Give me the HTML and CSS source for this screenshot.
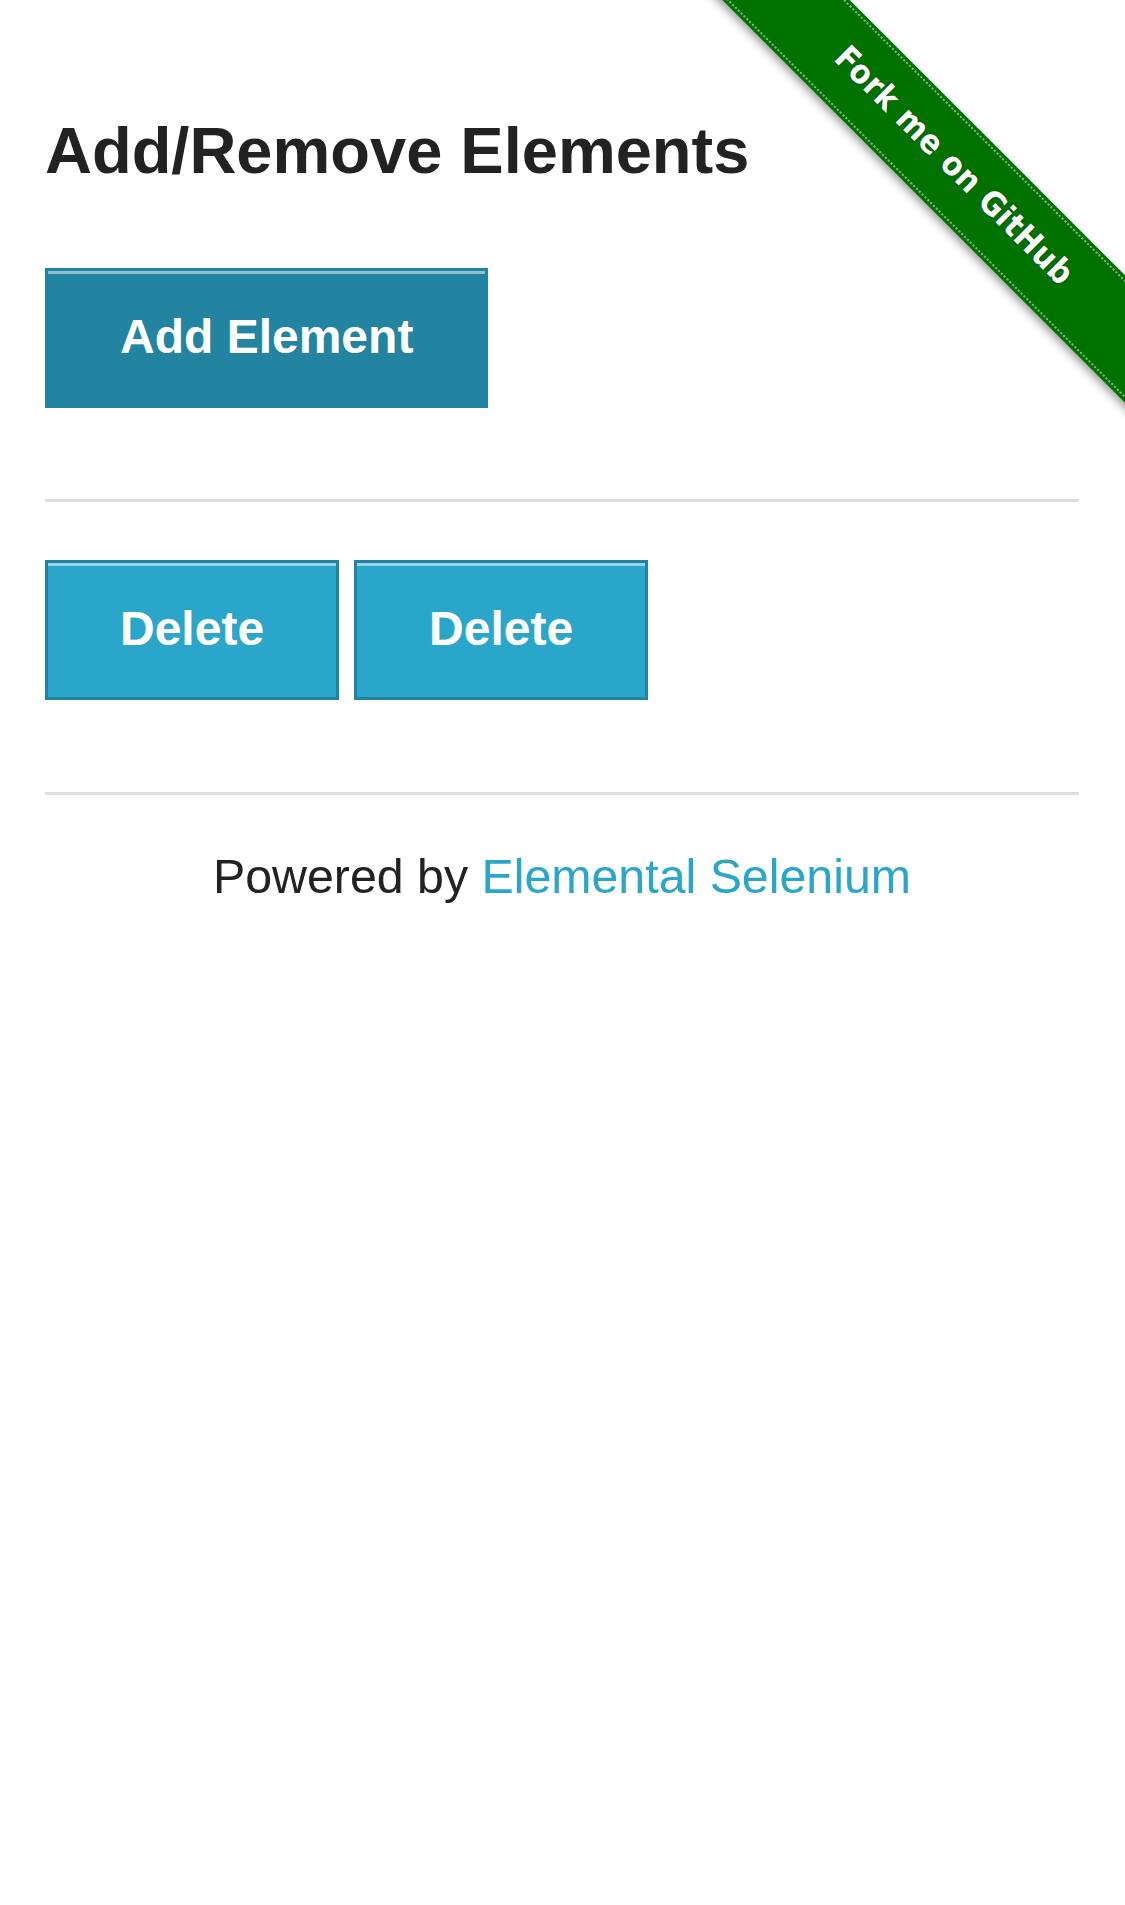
FILE: index.html
```html
<!DOCTYPE html>
<html>
<head>
<meta charset="utf-8">
<title>The Internet</title>
<link rel="stylesheet" href="styles.css">
</head>
<body>
<a class="ribbon-wrap" href="#"><span class="ribbon"><span class="ribbon-text">Fork me on GitHub</span></span></a>
<div class="page">
  <div class="example">
    <h3 class="title">Add/Remove Elements</h3>
    <button class="btn btn-add">Add Element</button>
    <hr class="rule rule-top">
    <div class="elements">
      <button class="btn btn-delete">Delete</button>
      <button class="btn btn-delete">Delete</button>
    </div>
  </div>
  <hr class="rule rule-bottom">
  <div class="footer">Powered by <a class="footer-link" href="#">Elemental Selenium</a></div>
</div>
</body>
</html>
```
FILE: styles.css
```css
html, body {
  margin: 0;
  padding: 0;
  background: #ffffff;
}
body {
  font-family: "Liberation Sans", Arial, Helvetica, sans-serif;
  color: #222222;
  position: relative;
  min-height: 1905px;
  overflow: hidden;
}
.page {
  padding: 118px 46px 0 45px;
}
.title {
  margin: 0;
  font-size: 65px;
  line-height: 65px;
  font-weight: bold;
  color: #222222;
}
.btn {
  font-family: "Liberation Sans", Arial, Helvetica, sans-serif;
  font-size: 48px;
  font-weight: bold;
  line-height: 59px;
  color: #ffffff;
  padding: 36px 72px 39px;
  border: 3px solid #2284a1;
  box-shadow: inset 0 3px 0 rgba(255, 255, 255, 0.5);
  margin: 0;
  cursor: pointer;
  display: block;
}
.btn-add {
  margin-top: 85px;
  background: #2284a1;
}
.btn-delete {
  background: #2ba6cb;
}
.elements {
  display: flex;
  gap: 15px;
  margin-top: 58px;
}
.rule {
  border: 0;
  border-top: 3px solid #dddddd;
  height: 0;
  margin: 0;
}
.rule-top {
  margin-top: 91px;
}
.rule-bottom {
  margin-top: 92px;
}
.footer {
  margin-top: 53px;
  text-align: center;
  font-size: 48.3px;
  color: #222222;
}
.footer-link {
  color: #2ba6cb;
  text-decoration: none;
}
.ribbon-wrap {
  position: absolute;
  top: 0;
  right: 0;
  width: 447px;
  height: 447px;
  overflow: hidden;
  z-index: 5;
  text-decoration: none;
}
.ribbon {
  position: absolute;
  left: -75px;
  top: 122px;
  width: 700px;
  height: 90px;
  background: #007200;
  transform: rotate(45deg);
  box-shadow: 0 4px 10px rgba(0, 0, 0, 0.38);
  display: flex;
  align-items: center;
  justify-content: center;
}
.ribbon::before,
.ribbon::after {
  content: "";
  position: absolute;
  left: 0;
  right: 0;
  height: 0;
  border-top: 2px dotted rgba(255, 255, 255, 0.5);
}
.ribbon::before {
  top: 3px;
}
.ribbon::after {
  bottom: 3px;
}
.ribbon-text {
  font-family: "DejaVu Sans Condensed", "DejaVu Sans", sans-serif;
  font-stretch: condensed;
  font-weight: bold;
  font-size: 33px;
  letter-spacing: 0.5px;
  color: #ffffff;
  text-shadow: 0 0 2px rgba(0, 0, 0, 0.5);
  margin-top: -6px;
}
```
